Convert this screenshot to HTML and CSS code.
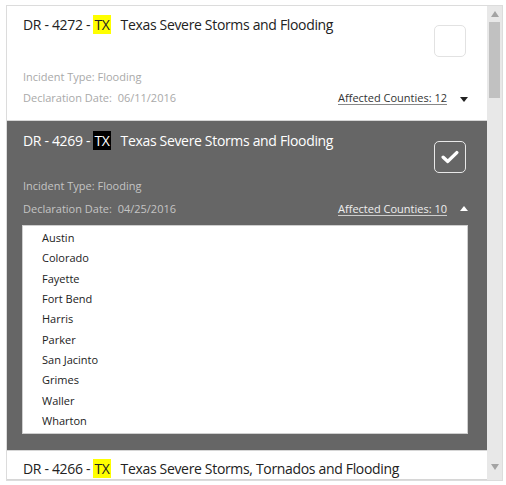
FILE: index.html
```html
<!DOCTYPE html>
<html>
<head>
<meta charset="utf-8">
<link rel="stylesheet" href="styles.css">
</head>
<body>
<div class="frame">
  <div class="list">
    <div class="card card--one">
      <div class="head">
        <div class="title">DR - 4272 - <span class="st">TX</span><span class="name">Texas Severe Storms and Flooding</span></div>
        <div class="check"></div>
      </div>
      <div class="meta meta--type">Incident Type: Flooding</div>
      <div class="meta-row">
        <div class="meta">Declaration Date:&nbsp; 06/11/2016</div>
        <div class="counties"><span class="link">Affected Counties: 12</span><span class="caret caret--down"></span></div>
      </div>
    </div>
    <div class="card card--open">
      <div class="head">
        <div class="title">DR - 4269 - <span class="st">TX</span><span class="name">Texas Severe Storms and Flooding</span></div>
        <div class="check check--on"><svg width="18" height="14" viewBox="0 0 18 14"><path d="M2.2 7.2 L6.8 11.4 L15.8 2.6" fill="none" stroke="#fff" stroke-width="3.4" stroke-linecap="round" stroke-linejoin="round"/></svg></div>
      </div>
      <div class="meta meta--type">Incident Type: Flooding</div>
      <div class="meta-row">
        <div class="meta">Declaration Date:&nbsp; 04/25/2016</div>
        <div class="counties"><span class="link">Affected Counties: 10</span><span class="caret caret--up"></span></div>
      </div>
      <ul class="county-list">
        <li>Austin</li>
        <li>Colorado</li>
        <li>Fayette</li>
        <li>Fort Bend</li>
        <li>Harris</li>
        <li>Parker</li>
        <li>San Jacinto</li>
        <li>Grimes</li>
        <li>Waller</li>
        <li>Wharton</li>
      </ul>
    </div>
    <div class="card card--three">
      <div class="head">
        <div class="title">DR - 4266 - <span class="st">TX</span><span class="name">Texas Severe Storms, Tornados and Flooding</span></div>
      </div>
    </div>
  </div>
  <div class="scrollbar">
    <div class="arrow arrow--up"></div>
    <div class="track"><div class="thumb"></div></div>
    <div class="arrow arrow--down"></div>
  </div>
</div>
</body>
</html>
```
FILE: styles.css
```css
* { box-sizing: border-box; }
html, body { margin: 0; padding: 0; background: #fff; }
body {
  font-family: "Open Sans", "Noto Sans", sans-serif;
  color: #222;
}
.frame {
  margin: 5px 0 0 6px;
  width: 497px;
  height: 476px;
  border: 1px solid #dcdcdc;
  display: flex;
  overflow: hidden;
}
.list {
  width: 480px;
  height: 474px;
  overflow: hidden;
}
.card {
  padding: 0 21px 0 16px;
  border-bottom: 1px solid #d6d6d6;
  background: #fff;
}
.card--one { padding-top: 9px; padding-bottom: 11px; height: 115px; }
.card--open { background: #666; padding-top: 10px; height: 330px; }
.card--three { padding-top: 8px; }
.head {
  display: flex;
  justify-content: space-between;
  align-items: flex-start;
}
.title {
  font-size: 14px;
  line-height: 20px;
  letter-spacing: -0.33px;
  color: #222;
  white-space: nowrap;
}
.card--open .title { color: #fff; }
.st {
  display: inline-block;
  background: #ffff00;
  padding: 0 1px;
  line-height: 19px;
}
.card--open .st { background: #000; color: #fff; }
.name { margin-left: 10px; }
.check {
  width: 32px;
  height: 32px;
  margin-top: 10px;
  border: 1px solid #e2e2e2;
  border-radius: 5px;
  background: #fff;
  display: flex;
  align-items: center;
  justify-content: center;
}
.check--on {
  background: transparent;
  border-color: #e8e8e8;
}
.meta {
  font-size: 11px;
  line-height: 20px;
  color: #a9a9a9;
}
.card--open .meta { color: #c4c4c4; }
.card--one .meta--type { margin-top: 10px; }
.card--open .meta--type { margin-top: 3px; }
.meta-row {
  display: flex;
  justify-content: space-between;
  margin-top: 1px;
}
.card--open .meta-row { margin-top: 3px; }
.counties {
  display: flex;
  align-items: center;
  font-size: 11px;
  line-height: 20px;
  margin-right: -2px;
}
.link {
  color: #333;
  text-decoration: underline;
  text-decoration-color: #888;
  text-underline-offset: 2px;
}
.card--open .link { color: #eee; text-decoration-color: #ccc; }
.caret {
  width: 0;
  height: 0;
  margin-left: 13px;
  border-left: 4.5px solid transparent;
  border-right: 4.5px solid transparent;
}
.caret--down { border-top: 5px solid #222; margin-top: 2px; }
.caret--up { border-bottom: 5px solid #fff; margin-top: -1px; }
.county-list {
  list-style: none;
  margin: 6px 0 0 -1px;
  padding: 2px 0 2px 19px;
  width: 446px;
  background: #fff;
  border: 1px solid #cfcfcf;
}
.county-list li {
  font-size: 11px;
  line-height: 20.33px;
  color: #222;
}
.scrollbar {
  width: 15px;
  height: 474px;
  background: #e8e8e8;
  display: flex;
  flex-direction: column;
  align-items: center;
}
.arrow { width: 0; height: 0; border-left: 4px solid transparent; border-right: 4px solid transparent; }
.arrow--up { border-bottom: 6px solid #a3a3a3; margin-top: 5px; }
.arrow--down { border-top: 6px solid #a3a3a3; margin-bottom: 10px; }
.track { flex: 1; width: 100%; display: flex; justify-content: center; padding-top: 5px; }
.thumb { width: 11px; height: 76px; background: #c1c1c1; }
```
